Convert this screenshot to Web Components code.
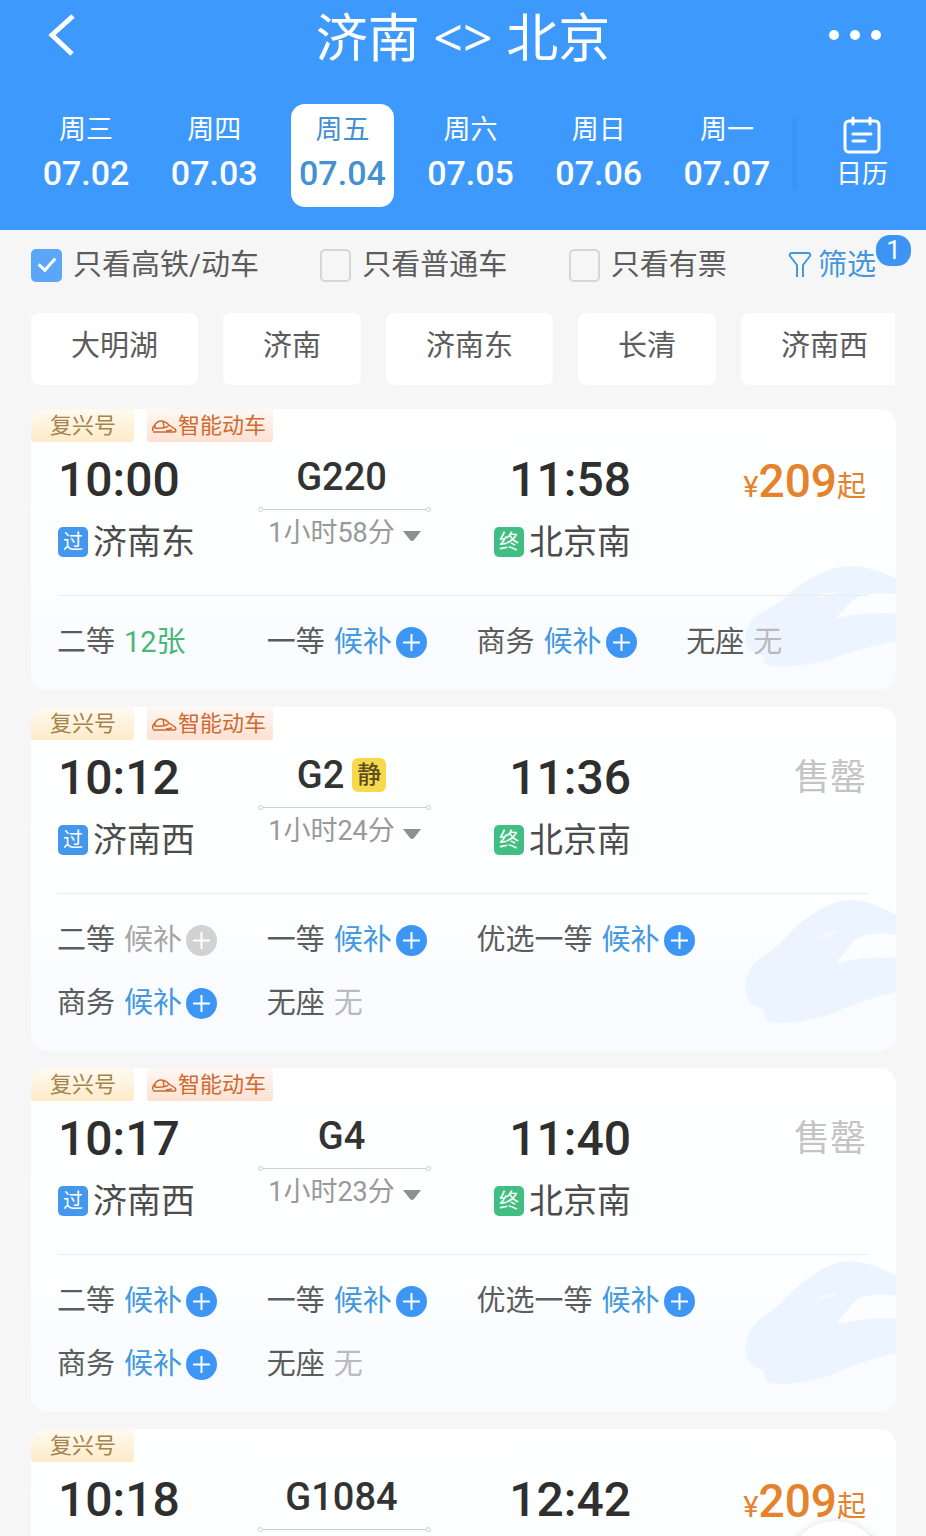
<!DOCTYPE html>
<html lang="zh-CN">
<head>
<meta charset="utf-8">
<meta name="viewport" content="width=device-width, initial-scale=1">
<title>济南 - 北京</title>
<style>
  body {
    margin: 0;
    background: #f6f6f6;
    color: #5c5c5c;
    font-family: Roboto, "Noto Sans CJK SC", sans-serif;
    font-size: 29px;
  }
</style>
</head>
<body>
<ticket-app>
  <title-bar slot="header">济南 &lt;&gt; 北京</title-bar>
  <date-strip slot="header">
    <date-cell day="周三" date="07.02"></date-cell>
    <date-cell day="周四" date="07.03"></date-cell>
    <date-cell day="周五" date="07.04" selected></date-cell>
    <date-cell day="周六" date="07.05"></date-cell>
    <date-cell day="周日" date="07.06"></date-cell>
    <date-cell day="周一" date="07.07"></date-cell>
  </date-strip>

  <filter-bar count="1">
    <check-option checked>只看高铁/动车</check-option>
    <check-option>只看普通车</check-option>
    <check-option>只看有票</check-option>
  </filter-bar>

  <station-bar>
    <station-chip>大明湖</station-chip>
    <station-chip>济南</station-chip>
    <station-chip>济南东</station-chip>
    <station-chip>长清</station-chip>
    <station-chip>济南西</station-chip>
  </station-bar>

  <train-list>
    <train-card code="G220" start="10:00" end="11:58" from="济南东" to="北京南" duration="1小时58分" price="209" smart>
      <seat-item name="二等" status="12张" kind="left"></seat-item>
      <seat-item name="一等" status="候补" kind="wait"></seat-item>
      <seat-item name="商务" status="候补" kind="wait"></seat-item>
      <seat-item name="无座" status="无" kind="none"></seat-item>
    </train-card>
    <train-card code="G2" quiet start="10:12" end="11:36" from="济南西" to="北京南" duration="1小时24分" smart>
      <seat-item name="二等" status="候补" kind="full"></seat-item>
      <seat-item name="一等" status="候补" kind="wait"></seat-item>
      <seat-item name="优选一等" status="候补" kind="wait" class="last"></seat-item>
      <seat-item name="商务" status="候补" kind="wait"></seat-item>
      <seat-item name="无座" status="无" kind="none"></seat-item>
    </train-card>
    <train-card code="G4" start="10:17" end="11:40" from="济南西" to="北京南" duration="1小时23分" smart>
      <seat-item name="二等" status="候补" kind="wait"></seat-item>
      <seat-item name="一等" status="候补" kind="wait"></seat-item>
      <seat-item name="优选一等" status="候补" kind="wait" class="last"></seat-item>
      <seat-item name="商务" status="候补" kind="wait"></seat-item>
      <seat-item name="无座" status="无" kind="none"></seat-item>
    </train-card>
    <train-card code="G1084" start="10:18" end="12:42" price="209"></train-card>
  </train-list>
</ticket-app>

<script>
// Reset shared by every element that draws a button
const buttonReset = `
  button {
    margin: 0;
    padding: 0;
    border: 0;
    background: none;
    color: inherit;
    font: inherit;
    cursor: pointer;
  }
  svg { display: block; }
`;

class TicketApp extends HTMLElement {
  constructor() {
    super();
    this.attachShadow({mode: 'open'});
    this.shadowRoot.innerHTML = `
      <style>
        ${buttonReset}
        :host {
          display: flex;
          flex-direction: column;
          height: 100vh;
          overflow: hidden;
        }
        header { background: #3d99fb; color: #fff; }
        main { flex: 1; min-height: 0; overflow: hidden; }
        .float {
          position: fixed;
          right: 43px;
          bottom: -81px;
          width: 96px;
          height: 96px;
          border-radius: 50%;
          background: #fff;
          box-shadow: 0 0 8px rgba(0, 0, 0, .12);
        }
      </style>
      <header><slot name="header"></slot></header>
      <main><slot></slot></main>
      <button class="float" aria-label="更多"></button>
    `;
  }
}

class TitleBar extends HTMLElement {
  constructor() {
    super();
    this.attachShadow({mode: 'open'});
    this.shadowRoot.innerHTML = `
      <style>
        ${buttonReset}
        :host {
          display: grid;
          grid-template-columns: 1fr auto 1fr;
          align-items: center;
          height: 74px;
          padding: 0 44px;
        }
        h1 {
          margin: 0;
          font-size: 52px;
          line-height: 74px;
          font-weight: 400;
          font-family: "Noto Sans", "Noto Sans CJK SC", sans-serif;
        }
        .more { justify-self: end; }
      </style>
      <button aria-label="返回">
        <svg width="34" height="48" viewBox="0 0 34 48" fill="none" stroke="#fff" stroke-width="5">
          <path d="M29 3 L8 22 L28 41"/>
        </svg>
      </button>
      <h1><slot></slot></h1>
      <button class="more" aria-label="菜单">
        <svg width="54" height="16" viewBox="0 0 54 16" fill="#fff">
          <circle cx="6" cy="6" r="5"/><circle cx="27" cy="6" r="5"/><circle cx="48" cy="6" r="5"/>
        </svg>
      </button>
    `;
  }
}

class DateStrip extends HTMLElement {
  constructor() {
    super();
    this.attachShadow({mode: 'open'});
    this.shadowRoot.innerHTML = `
      <style>
        ${buttonReset}
        :host {
          display: flex;
          align-items: flex-start;
          padding: 30px 0 23px 22px;
        }
        .days { flex: 1; display: grid; grid-template-columns: repeat(6, 1fr); }
        .edge {
          width: 7px;
          height: 72px;
          margin-top: 14px;
          background: linear-gradient(90deg, rgba(30, 110, 210, 0), rgba(30, 110, 210, .15), rgba(30, 110, 210, 0));
        }
        .calendar {
          width: 128px;
          display: flex;
          flex-direction: column;
          align-items: center;
          padding-top: 12px;
          font-size: 26px;
          line-height: 40px;
        }
      </style>
      <div class="days"><slot></slot></div>
      <div class="edge"></div>
      <button class="calendar">
        <svg width="38" height="38" viewBox="0 0 38 38" fill="none" stroke="#fff" stroke-width="3" stroke-linecap="round">
          <rect x="2" y="5" width="34" height="31" rx="4"/>
          <path d="M10 2 V8 M27 2 V8"/>
          <path d="M10 18 H28 M10 25 H22"/>
        </svg>
        日历
      </button>
    `;
  }
}

class DateCell extends HTMLElement {
  constructor() {
    super();
    this.attachShadow({mode: 'open'});
  }

  connectedCallback() {
    this.shadowRoot.innerHTML = `
      <style>
        ${buttonReset}
        :host { display: flex; justify-content: center; }
        button {
          width: 103px;
          height: 103px;
          padding-bottom: 4px;
          border-radius: 14px;
          text-align: center;
        }
        span { display: block; font-size: 27px; line-height: 38px; }
        b { display: block; font-size: 34px; line-height: 48px; font-weight: 500; }
        :host([selected]) button { background: #fff; color: #4590d0; }
      </style>
      <button><span>${this.getAttribute('day')}</span><b>${this.getAttribute('date')}</b></button>
    `;
  }
}

class FilterBar extends HTMLElement {
  constructor() {
    super();
    this.attachShadow({mode: 'open'});
  }

  connectedCallback() {
    this.shadowRoot.innerHTML = `
      <style>
        ${buttonReset}
        :host {
          display: flex;
          justify-content: space-between;
          align-items: center;
          height: 70px;
          padding: 0 50px 0 31px;
        }
        button {
          display: flex;
          align-items: center;
          gap: 6px;
          color: #4596dc;
          line-height: 40px;
        }
        .label { position: relative; }
        .count {
          position: absolute;
          left: 100%;
          top: -10px;
          width: 35px;
          border-radius: 14px;
          background: #3d94f3;
          color: #fff;
          font-size: 26px;
          line-height: 31px;
          text-align: center;
        }
      </style>
      <slot></slot>
      <button>
        <svg width="24" height="28" viewBox="0 0 24 28" fill="none" stroke="#4596dc" stroke-width="2" stroke-linejoin="round">
          <path d="M9 26 V14 L2 5 Q1 2 4 2 H20 Q23 2 22 5 L15 14 V26"/>
        </svg>
        <span class="label">筛选<span class="count">${this.getAttribute('count')}</span></span>
      </button>
    `;
  }
}

class CheckOption extends HTMLElement {
  constructor() {
    super();
    this.attachShadow({mode: 'open'});
  }

  connectedCallback() {
    this.shadowRoot.innerHTML = `
      <style>
        :host { display: block; }
        label { display: flex; align-items: center; gap: 11px; line-height: 40px; }
        input {
          appearance: none;
          display: grid;
          place-items: center;
          box-sizing: border-box;
          width: 31px;
          height: 33px;
          margin: 0;
          border: 2px solid #d6d6d6;
          border-radius: 5px;
        }
        input:checked { background: #5ba6f8; border-color: #5ba6f8; }
        input:checked::before {
          content: "";
          width: 7px;
          height: 14px;
          margin-bottom: 5px;
          border: solid #fff;
          border-width: 0 3px 3px 0;
          transform: rotate(42deg);
        }
      </style>
      <label><input type="checkbox" ${this.hasAttribute('checked') ? 'checked' : ''}><span><slot></slot></span></label>
    `;
  }
}

class StationBar extends HTMLElement {
  constructor() {
    super();
    this.attachShadow({mode: 'open'});
    this.shadowRoot.innerHTML = `
      <style>
        :host {
          display: flex;
          gap: 25px;
          margin: 13px 31px 24px;
          overflow: hidden;
        }
      </style>
      <slot></slot>
    `;
  }
}

class StationChip extends HTMLElement {
  constructor() {
    super();
    this.attachShadow({mode: 'open'});
    this.shadowRoot.innerHTML = `
      <style>
        ${buttonReset}
        :host { display: block; flex: none; }
        button {
          height: 72px;
          padding: 0 40px 12px;
          border-radius: 8px;
          background: #fff;
        }
      </style>
      <button><slot></slot></button>
    `;
  }
}

class TrainList extends HTMLElement {
  constructor() {
    super();
    this.attachShadow({mode: 'open'});
    this.shadowRoot.innerHTML = `
      <style>
        :host {
          display: flex;
          flex-direction: column;
          gap: 17px;
          padding: 0 30px 0 31px;
        }
      </style>
      <slot></slot>
    `;
  }
}

class TrainCard extends HTMLElement {
  constructor() {
    super();
    this.attachShadow({mode: 'open'});
  }

  // Number and ¥ when there are tickets, a grey label when sold out
  price() {
    const price = this.getAttribute('price');
    if (!price) {
      return '<div class="sold">售罄</div>';
    }
    return `<div class="price">¥<b>${price}</b>起</div>`;
  }

  station(attr, mark) {
    const name = this.getAttribute(attr);
    return name ? `<div class="station"><i class="${attr}">${mark}</i>${name}</div>` : '';
  }

  connectedCallback() {
    const duration = this.getAttribute('duration');
    this.shadowRoot.innerHTML = `
      <style>
        ${buttonReset}
        :host {
          display: block;
          position: relative;
          overflow: hidden;
          border-radius: 16px;
          background: linear-gradient(#fff, #fdffff 50%, #f8fbff);
        }
        .train {
          position: absolute;
          right: 0;
          bottom: 8%;
          width: 152px;
          height: 36%;
        }
        .tags { display: flex; gap: 13px; font-size: 22px; line-height: 33px; }
        .tag {
          display: flex;
          align-items: center;
          height: 33px;
          padding: 0 18px 0 19px;
          border-radius: 0 0 3px 3px;
          background: linear-gradient(#fffaf2, #fdebc9);
          color: #a5834a;
        }
        .tag.smart {
          gap: 1px;
          padding: 0 7px 0 5px;
          background: linear-gradient(#fff8f5, #fde1d2);
          color: #cf6a30;
        }
        .trip {
          position: relative;
          display: flex;
          gap: 63px;
          box-sizing: border-box;
          min-height: 153px;
          padding: 12px 30px 0 27px;
        }
        .time { font-size: 48px; line-height: 52px; font-weight: 500; color: #2f2f2f; }
        .stop { min-width: 137px; }
        .stop.end .time { text-align: right; }
        .station {
          display: flex;
          align-items: center;
          gap: 5px;
          margin-top: 13px;
          font-size: 34px;
          line-height: 46px;
          color: #4c4c4c;
        }
        .station i {
          width: 30px;
          border-radius: 5px;
          background: #4397ec;
          color: #fff;
          font-size: 20px;
          font-style: normal;
          line-height: 30px;
          text-align: center;
        }
        .station i.to { background: #41bf83; }
        .middle { width: 173px; padding-top: 3px; }
        .code {
          display: flex;
          justify-content: center;
          align-items: center;
          gap: 8px;
          margin-right: 6px;
          font-size: 38px;
          line-height: 40px;
          font-weight: 500;
          color: #333;
        }
        .code mark {
          width: 34px;
          border-radius: 6px;
          background: #f9d94c;
          color: #5d5020;
          font-size: 24px;
          line-height: 34px;
          text-align: center;
        }
        .line {
          display: flex;
          align-items: center;
          height: 6px;
          margin: 9px 0 4px;
        }
        .line::before, .line::after {
          content: "";
          width: 3px;
          height: 3px;
          border: 1px solid #d0d0d0;
          border-radius: 50%;
        }
        .line span { flex: 1; height: 1px; background: #d0d0d0; }
        .duration {
          display: flex;
          justify-content: center;
          align-items: center;
          gap: 8px;
          width: 100%;
          font-size: 27px;
          line-height: 34px;
          color: #999;
          white-space: nowrap;
        }
        .duration svg { margin-top: 6px; }
        .price { margin-left: auto; font-size: 29px; line-height: 54px; color: #e5822c; }
        .price b { font-size: 46px; font-weight: 500; }
        .sold { margin-left: auto; font-size: 36px; line-height: 52px; color: #c4c4c4; }
        .seats {
          position: relative;
          display: grid;
          grid-template-columns: repeat(4, 1fr);
          row-gap: 22px;
          margin-left: 26px;
          padding: 26px 0 27px;
        }
        .rule { position: relative; height: 1px; margin: 0 28px 0 27px; background: #ececef; }
      </style>
      <svg class="train" viewBox="0 0 152 124" preserveAspectRatio="none">
        <path fill="#ecf5ff" d="M152 15 Q126 0 105 0 Q88 1 72 12 Q54 23 42 37 Q34 46 22 54 Q8 63 4 74 Q-2 90 5 101 Q10 107 20 110 Q19 118 24 121 Q32 124 42 123 Q62 122 85 115 Q118 100 152 92 V58 Q120 56 92 64 Q96 58 105 47 Q112 37 122 35 Q138 32 152 35 Z"/>
        <path fill="#f3f9ff" d="M73 39 Q78 33 95 31 Q88 38 73 39 Z"/>
      </svg>
      <div class="tags">
        <span class="tag">复兴号</span>
        ${this.hasAttribute('smart') ? `
        <span class="tag smart">
          <svg width="25" height="14" viewBox="0 0 25 14" fill="none" stroke="#cf6a30" stroke-width="1.5" stroke-linejoin="round">
            <path d="M1 12 Q0 9 2 7 Q5 2 9 2 Q13 2 17 6 L23 10 Q25 13 22 13 H1 M3 6 V9 Q8 10 15 8 L17 6 M11 2 L12 8 M14 12 L20 11"/>
          </svg>
          智能动车
        </span>` : ''}
      </div>
      <div class="trip">
        <div class="stop start">
          <div class="time">${this.getAttribute('start')}</div>
          ${this.station('from', '过')}
        </div>
        <div class="middle">
          <div class="code">${this.getAttribute('code')}${this.hasAttribute('quiet') ? '<mark>静</mark>' : ''}</div>
          <div class="line"><span></span></div>
          ${duration ? `
          <button class="duration">${duration}
            <svg width="18" height="11" viewBox="0 0 18 11" fill="#8f8f8f"><path d="M0 0 H18 L11 9 Q9 11 7 9 Z"/></svg>
          </button>` : ''}
        </div>
        <div class="stop end">
          <div class="time">${this.getAttribute('end')}</div>
          ${this.station('to', '终')}
        </div>
        ${this.price()}
      </div>
      ${this.children.length ? '<div class="rule"></div><div class="seats"><slot></slot></div>' : ''}
    `;
  }
}

class SeatItem extends HTMLElement {
  constructor() {
    super();
    this.attachShadow({mode: 'open'});
  }

  connectedCallback() {
    const kind = this.getAttribute('kind');
    const status = this.getAttribute('status');
    const plus = `
      <svg width="31" height="31" viewBox="0 0 31 31">
        <circle cx="15.5" cy="15.5" r="15.5" fill="${kind === 'full' ? '#d2d2d2' : '#3d96f5'}"/>
        <path d="M7 15.5 H24 M15.5 7 V24" stroke="#fff" stroke-width="2"/>
      </svg>
    `;
    // Only the waiting list opens something, the other states are plain text
    const content = kind === 'wait' || kind === 'full'
      ? `<button class="${kind}" ${kind === 'full' ? 'disabled' : ''}>${status}${plus}</button>`
      : `<span class="${kind}">${status}</span>`;

    this.shadowRoot.innerHTML = `
      <style>
        ${buttonReset}
        :host {
          display: flex;
          align-items: center;
          gap: 9px;
          height: 41px;
          line-height: 41px;
          white-space: nowrap;
          color: #5c5c5c;
        }
        :host(.last) { grid-column: span 2; }
        button { display: flex; align-items: center; gap: 4px; }
        .wait { color: #4398e0; }
        .full { color: #a5a5a5; }
        .left { color: #4bb676; }
        .none { color: #b9b9be; }
      </style>
      <span>${this.getAttribute('name')}</span>${content}
    `;
  }
}

window.customElements.define('ticket-app', TicketApp);
window.customElements.define('title-bar', TitleBar);
window.customElements.define('date-strip', DateStrip);
window.customElements.define('date-cell', DateCell);
window.customElements.define('filter-bar', FilterBar);
window.customElements.define('check-option', CheckOption);
window.customElements.define('station-bar', StationBar);
window.customElements.define('station-chip', StationChip);
window.customElements.define('train-list', TrainList);
window.customElements.define('train-card', TrainCard);
window.customElements.define('seat-item', SeatItem);
</script>
</body>
</html>
